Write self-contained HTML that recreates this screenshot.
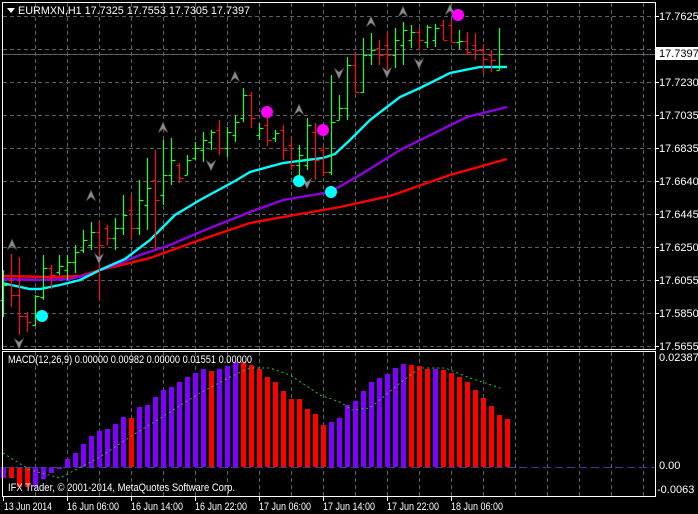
<!DOCTYPE html>
<html><head><meta charset="utf-8"><style>
html,body{margin:0;padding:0;background:#000;}
svg{display:block}
text{font-family:"Liberation Sans",sans-serif;font-size:11px;fill:#fff}
</style></head><body>
<svg id="s" width="698" height="514" xmlns="http://www.w3.org/2000/svg">
<rect width="698" height="514" fill="#000"/>
<g id="grid" stroke="#56606a" stroke-dasharray="4,3" stroke-width="1"></g>
<line x1="2" y1="54.5" x2="655" y2="54.5" stroke="#5a6068"/>
<g id="ma" fill="none" stroke-width="2.4">
<polyline stroke="#ff0000" points="2,276 50,277 80,276 100,270 130,263 150,258 200,240 250,223 300,214 340,207 390,196 450,175 507,159"/>
<polyline stroke="#9000e0" points="2,279 40,280 70,279 90,274 120,263 140,255 170,245 200,232 250,212 283,200 330,192 360,175 400,150 467,117 507,107"/>
<polyline stroke="#00ffff" points="2,283 30,289 40,289 60,285 80,280 100,270 125,259 150,240 175,215 200,200 235,181 250,172 283,163 323,158 335,154 350,140 370,120 400,97 420,88 450,73 480,67 507,67"/>
</g>
<g id="bars" stroke-width="1.2"></g>
<g id="arr" fill="#8c8c8c" stroke="#3a3a3a" stroke-width="0.6"></g>
<g>
<circle cx="267" cy="112" r="6" fill="#ff00ff"/><circle cx="323" cy="130" r="6" fill="#ff00ff"/><circle cx="458" cy="15" r="6" fill="#ff00ff"/>
<circle cx="42" cy="316" r="6" fill="#00ffff"/><circle cx="299" cy="181" r="6" fill="#00ffff"/><circle cx="331" cy="192" r="6" fill="#00ffff"/>
</g>
<g id="hist"></g>
<line x1="3" y1="467.5" x2="655" y2="467.5" stroke="#3a3a9a" stroke-dasharray="8,4"/>
<polyline fill="none" stroke="#22cc22" stroke-dasharray="2,3" points="3,453 30,470 60,478 100,457 130,437 170,412 200,393 230,377 250,368 270,368 290,375 320,395 340,402 352,410 370,408 400,383 420,368 445,368 470,378 503,389"/>
<rect x="2.5" y="2.5" width="653" height="347" fill="none" stroke="#fff"/>
<rect x="2.5" y="351.5" width="653" height="145" fill="none" stroke="#fff"/>
<rect x="0" y="0" width="698" height="2" fill="#000"/>
<path d="M7,8 L15,8 L11,13 Z" fill="#fff"/>
<text x="18" y="14" textLength="232" lengthAdjust="spacingAndGlyphs">EURMXN,H1  17.7325 17.7553 17.7305 17.7397</text>
<text x="8" y="363" textLength="244" lengthAdjust="spacingAndGlyphs">MACD(12,26,9) 0.00000 0.00982 0.00000 0.01551 0.00000</text>
<text x="8" y="491" textLength="227" lengthAdjust="spacingAndGlyphs">IFX Trader, © 2001-2014, MetaQuotes Software Corp.</text>
<g id="rax"></g>
<rect x="656" y="47" width="42" height="13" fill="#fff"/>
<text x="659" y="57" style="fill:#000">17.7397</text>
<text x="659" y="361">0.02387</text>
<text x="659" y="469">0.00</text>
<text x="657" y="493">-0.0063</text>
<g stroke="#fff"><line x1="3.5" y1="497" x2="3.5" y2="501"/><line x1="67.5" y1="497" x2="67.5" y2="501"/><line x1="131.5" y1="497" x2="131.5" y2="501"/><line x1="195.5" y1="497" x2="195.5" y2="501"/><line x1="259.5" y1="497" x2="259.5" y2="501"/><line x1="323.5" y1="497" x2="323.5" y2="501"/><line x1="387.5" y1="497" x2="387.5" y2="501"/><line x1="451.5" y1="497" x2="451.5" y2="501"/></g>
<g>
<text x="4" y="510" textLength="48" lengthAdjust="spacingAndGlyphs">13 Jun 2014</text>
<text x="67" y="510" textLength="52" lengthAdjust="spacingAndGlyphs">16 Jun 06:00</text>
<text x="131" y="510" textLength="52" lengthAdjust="spacingAndGlyphs">16 Jun 14:00</text>
<text x="195" y="510" textLength="52" lengthAdjust="spacingAndGlyphs">16 Jun 22:00</text>
<text x="259" y="510" textLength="52" lengthAdjust="spacingAndGlyphs">17 Jun 06:00</text>
<text x="323" y="510" textLength="52" lengthAdjust="spacingAndGlyphs">17 Jun 14:00</text>
<text x="387" y="510" textLength="52" lengthAdjust="spacingAndGlyphs">17 Jun 22:00</text>
<text x="451" y="510" textLength="52" lengthAdjust="spacingAndGlyphs">18 Jun 06:00</text>
</g>
<text x="659" y="20">17.7625</text><text x="659" y="86">17.7230</text><text x="659" y="119">17.7035</text><text x="659" y="152">17.6835</text><text x="659" y="185">17.6640</text><text x="659" y="218">17.6445</text><text x="659" y="251">17.6250</text><text x="659" y="284">17.6055</text><text x="659" y="317">17.5850</text><text x="659" y="350">17.5655</text>
</svg>
<script>
var NS="http://www.w3.org/2000/svg";
function el(p,t,a){var e=document.createElementNS(NS,t);for(var k in a)e.setAttribute(k,a[k]);document.getElementById(p).appendChild(e);return e;}
for(var x=35;x<655;x+=32){el("grid","line",{x1:x+.5,y1:3,x2:x+.5,y2:349});el("grid","line",{x1:x+.5,y1:352,x2:x+.5,y2:496});}
for(var y=16;y<350;y+=33){el("grid","line",{x1:3,y1:y+.5,x2:655,y2:y+.5});}
for(var y=16;y<350;y+=33){el("rax","line",{x1:655,y1:y+.5,x2:659,y2:y+.5,stroke:"#fff"});}
var B=[[270,317,300,285],[254,307,280,295],[257,335,295,316],[312,332,316,322],[295,325,325,296],[255,300,297,268],[265,289,268,275],[255,275,272,266],[255,280,270,262],[245,273,262,252],[230,253,250,240],[222,250,245,232],[222,300,232,245],[225,245,228,238],[218,250,238,228],[195,235,228,215],[195,240,210,228],[180,235,228,200],[158,230,205,188],[150,250,180,200],[140,205,195,175],[138,185,175,160],[163,183,165,178],[155,175,175,160],[142,160,158,148],[132,162,150,140],[130,150,142,132],[120,155,130,148],[127,157,148,132],[115,142,135,122],[88,122,118,95],[92,128,95,118],[123,140,135,128],[118,146,125,140],[130,142,138,133],[125,160,130,150],[137,170,145,165],[145,175,165,155],[118,170,165,125],[123,180,132,160],[146,176,150,172],[75,175,172,122],[95,120,120,108],[57,120,108,65],[52,93,65,92],[38,93,92,55],[33,65,55,50],[40,65,48,55],[32,70,45,55],[28,68,55,40],[22,65,45,30],[25,48,40,32],[28,50,32,40],[25,48,42,27],[24,47,40,28],[20,40,25,40],[20,42,25,42],[30,49,42,41],[32,55,41,52],[33,60,45,50],[44,73,50,59],[50,72,55,60],[28,70,70,54]];
B.forEach(function(b,i){var x=3+8*i+.5;var c=b[3]<b[2]?"#22ff22":"#ff1010";
el("bars","line",{x1:x,y1:b[0],x2:x,y2:b[1],stroke:c});
el("bars","line",{x1:x-3,y1:b[2]+.5,x2:x,y2:b[2]+.5,stroke:c});
el("bars","line",{x1:x,y1:b[3]+.5,x2:x+4,y2:b[3]+.5,stroke:c});});
[[12,245],[91,196],[163,128],[235,77],[299,110],[371,22],[403,12],[450,10]].forEach(function(a){el("arr","path",{d:"M"+(a[0]-5)+","+(a[1]+5)+" L"+a[0]+","+(a[1]-6)+" L"+(a[0]+5)+","+(a[1]+5)+" L"+a[0]+","+(a[1]+1)+" Z"});});
[[19,343],[99,258],[211,165],[307,183],[339,73],[387,72],[419,63]].forEach(function(a){el("arr","path",{d:"M"+(a[0]-5)+","+(a[1]-5)+" L"+a[0]+","+(a[1]+6)+" L"+(a[0]+5)+","+(a[1]-5)+" L"+a[0]+","+(a[1]-1)+" Z"});});
var H=[-11,-11,-20,-20,-20,-12,-6,-2,8,14,23,31,36,38,43,50,49,60,62,70,77,80,85,90,94,98,96,98,101,105,105,102,98,90,85,76,68,68,58,53,42,45,49,62,66,76,85,89,93,99,103,102,101,98,98,97,94,90,85,77,69,61,52,48];
var R={1:1,2:1,3:1,16:1,26:1,30:1,31:1,32:1,33:1,34:1,35:1,36:1,37:1,38:1,39:1,40:1,51:1,52:1,53:1,55:1,56:1,57:1,58:1,59:1,60:1,61:1,62:1,63:1};
H.forEach(function(h,i){var x=1+8*i;var y=h>0?467-h:467;el("hist","rect",{x:x,y:y,width:5,height:Math.abs(h),fill:R[i]?"#ff0000":"#8000ff"});});
</script>
</body></html>
